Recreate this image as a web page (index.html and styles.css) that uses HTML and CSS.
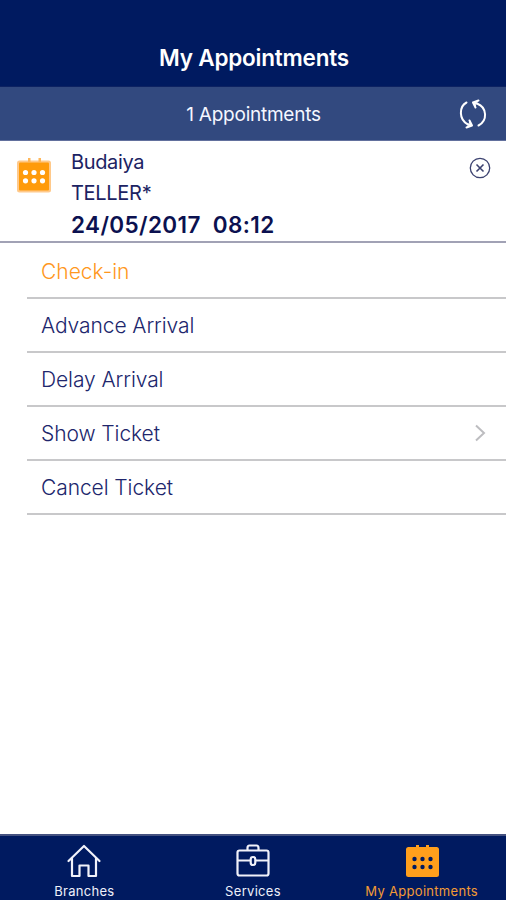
FILE: index.html
```html
<!DOCTYPE html>
<html lang="en">
<head>
<meta charset="utf-8">
<title>My Appointments</title>
<link rel="stylesheet" href="styles.css">
</head>
<body>
<div class="app">
  <header class="header"><h1 class="title">My Appointments</h1></header>
  <div class="summary">
    <span class="count">1 Appointments</span>
    <svg class="refresh" width="30" height="32" viewBox="0 0 30 32" fill="none" stroke="#fff" stroke-width="2" stroke-linecap="round" stroke-linejoin="round">
      <path d="M8.500 4.500C1 8.500 .500 21.500 10 26.500M20.500 27.500C29.500 23 29.500 9.500 19 5.500"/>
      <path d="M11.500 22.500L14 27.500 8.500 29.500M17.500 9.500L15 4.500 20.500 2.500"/>
      <path d="M12 24L13.500 27.300 10 28.500zM17 8L15.500 4.700 19 3.500z" fill="#fff" stroke-width="1"/>
    </svg>
  </div>
  <section class="appointment">
    <svg class="calendar" width="36" height="36" viewBox="0 0 36 36">
      <rect x="1" y="3.500" width="34" height="32" rx="2.500" fill="#ffc98a"/>
      <path d="M12 1h2.500v4h-2.500zM22.500 1h2.500v4h-2.500z" fill="#ffb75a"/>
      <rect x="3" y="5.500" width="30" height="28" rx="1" fill="#ff9b0b"/>
      <g fill="#fff"><circle cx="9.500" cy="15.500" r="2.600"/><circle cx="18" cy="15.500" r="2.600"/><circle cx="26.500" cy="15.500" r="2.600"/><circle cx="9.500" cy="23.800" r="2.600"/><circle cx="18" cy="23.800" r="2.600"/><circle cx="26.500" cy="23.800" r="2.600"/></g>
    </svg>
    <div class="details">
      <div class="branch">Budaiya</div>
      <div class="service">TELLER*</div>
      <div class="time">24/05/2017&nbsp; 08:12</div>
    </div>
    <svg class="close" width="22" height="22" viewBox="0 0 22 22" fill="none" stroke="#3c4270">
      <circle cx="11" cy="11" r="9.700" stroke-width="1.300"/><path d="M7.500 7.500l7 7M14.500 7.500l-7 7" stroke-width="1.600"/>
    </svg>
  </section>
  <ul class="actions">
    <li class="action checkin"><span>Check-in</span></li>
    <li class="action advance"><span>Advance Arrival</span></li>
    <li class="action delay"><span>Delay Arrival</span></li>
    <li class="action show"><span>Show Ticket</span>
      <svg width="12" height="18" viewBox="0 0 12 18" fill="none" stroke="#bdbdc0" stroke-width="2"><path d="M2 1.500L10 9l-8 7.500"/></svg>
    </li>
    <li class="action cancel"><span>Cancel Ticket</span></li>
  </ul>
  <nav class="tabs">
    <div class="tab branches">
      <svg width="36" height="36" viewBox="0 0 36 36" fill="none" stroke="#f1f2fa" stroke-width="2.200" stroke-linejoin="round" stroke-linecap="round"><path d="M2.500 18L18 3l15.500 15M6 15v18h7.500V22.500h9v10.500h7.500V15"/></svg>
      <span>Branches</span>
    </div>
    <div class="tab services">
      <svg width="36" height="36" viewBox="0 0 36 36" fill="none" stroke="#f1f2fa" stroke-width="2.200" stroke-linejoin="round"><rect x="2.500" y="7.500" width="31" height="25" rx="2"/><path d="M12.500 7.500V5Q12.500 2.500 14.500 2.500h7Q23.500 2.500 23.500 5v2.500M2.500 17.500H15.500M20.500 17.500H33.500"/><rect x="15.700" y="14" width="4.600" height="8" rx="2.300"/></svg>
      <span>Services</span>
    </div>
    <div class="tab mine">
      <svg width="36" height="36" viewBox="0 0 36 36"><path d="M12 2h3v3h-3zM22 2h3v3h-3z" fill="#ff9f1c"/><rect x="2" y="4" width="33" height="30" rx="2.500" fill="#ff9f1c"/><g fill="#001a60"><circle cx="10.500" cy="16" r="2.200"/><circle cx="18.500" cy="16" r="2.200"/><circle cx="26.500" cy="16" r="2.200"/><circle cx="10.500" cy="24" r="2.200"/><circle cx="18.500" cy="24" r="2.200"/><circle cx="26.500" cy="24" r="2.200"/></g></svg>
      <span>My Appointments</span>
    </div>
  </nav>
</div>
</body>
</html>
```
FILE: styles.css
```css
* { box-sizing: border-box; }
body { margin: 0; background: #fff; font-family: Inter, "Liberation Sans", sans-serif; color: #1c2363; }
.app { width: 506px; height: 900px; display: flex; flex-direction: column; overflow: hidden; }
.header { height: 87px; flex: none; background: #001a60; padding-top: 44px; text-align: center; border-bottom: 1px solid #0d2262; }
.title { margin: 0; font-size: 22.500px; line-height: 28px; font-weight: 600; letter-spacing: -0.200px; color: #fff; padding-left: 2px; }
.summary { height: 54px; flex: none; background: #32497f; border-bottom: 1px solid #62709d; display: grid; grid-template-columns: 1fr 30px 18px; align-items: center; color: #f5f7ff; }
.count { font-size: 19px; letter-spacing: -0.250px; padding: 2px 0 0 49px; text-align: center; }
.appointment { height: 102px; flex: none; display: flex; border-bottom: 2px solid #a1a2b5; padding: 6px 15px 0 16px; }
.calendar { margin-top: 10px; flex: none; }
.details { margin-left: 19px; flex: 1; white-space: nowrap; font-size: 20px; line-height: 31px; }
.branch { letter-spacing: -0.350px; }
.service { letter-spacing: -0.300px; }
.time { font-weight: 600; font-size: 22.500px; letter-spacing: 0.370px; color: #0b1150; }
.close { margin-top: 10px; }
.actions { list-style: none; margin: 0 0 0 27px; padding: 0; flex: 1; }
.action { height: 54px; border-bottom: 2px solid #c8c8ca; padding: 0 20px 0 14px; display: flex; justify-content: space-between; align-items: center; font-size: 21px; font-weight: 300; letter-spacing: -0.080px; color: #20266c; }
.checkin { height: 56px; padding-top: 2px; letter-spacing: 0; color: #ff9720; }
.show { height: 54px; }
.cancel { height: 54px; }
.tabs { height: 66px; flex: none; background: #001a60; border-top: 2px solid #455280; display: grid; grid-template-columns: repeat(3, 1fr); color: #eef0fa; }
.tab { display: flex; flex-direction: column; align-items: center; padding-top: 7px; font-size: 13px; line-height: 16px; letter-spacing: 0.300px; white-space: nowrap; }
.tab svg { flex: none; margin-bottom: 4px; }
.mine { color: #f39a35; }
```
